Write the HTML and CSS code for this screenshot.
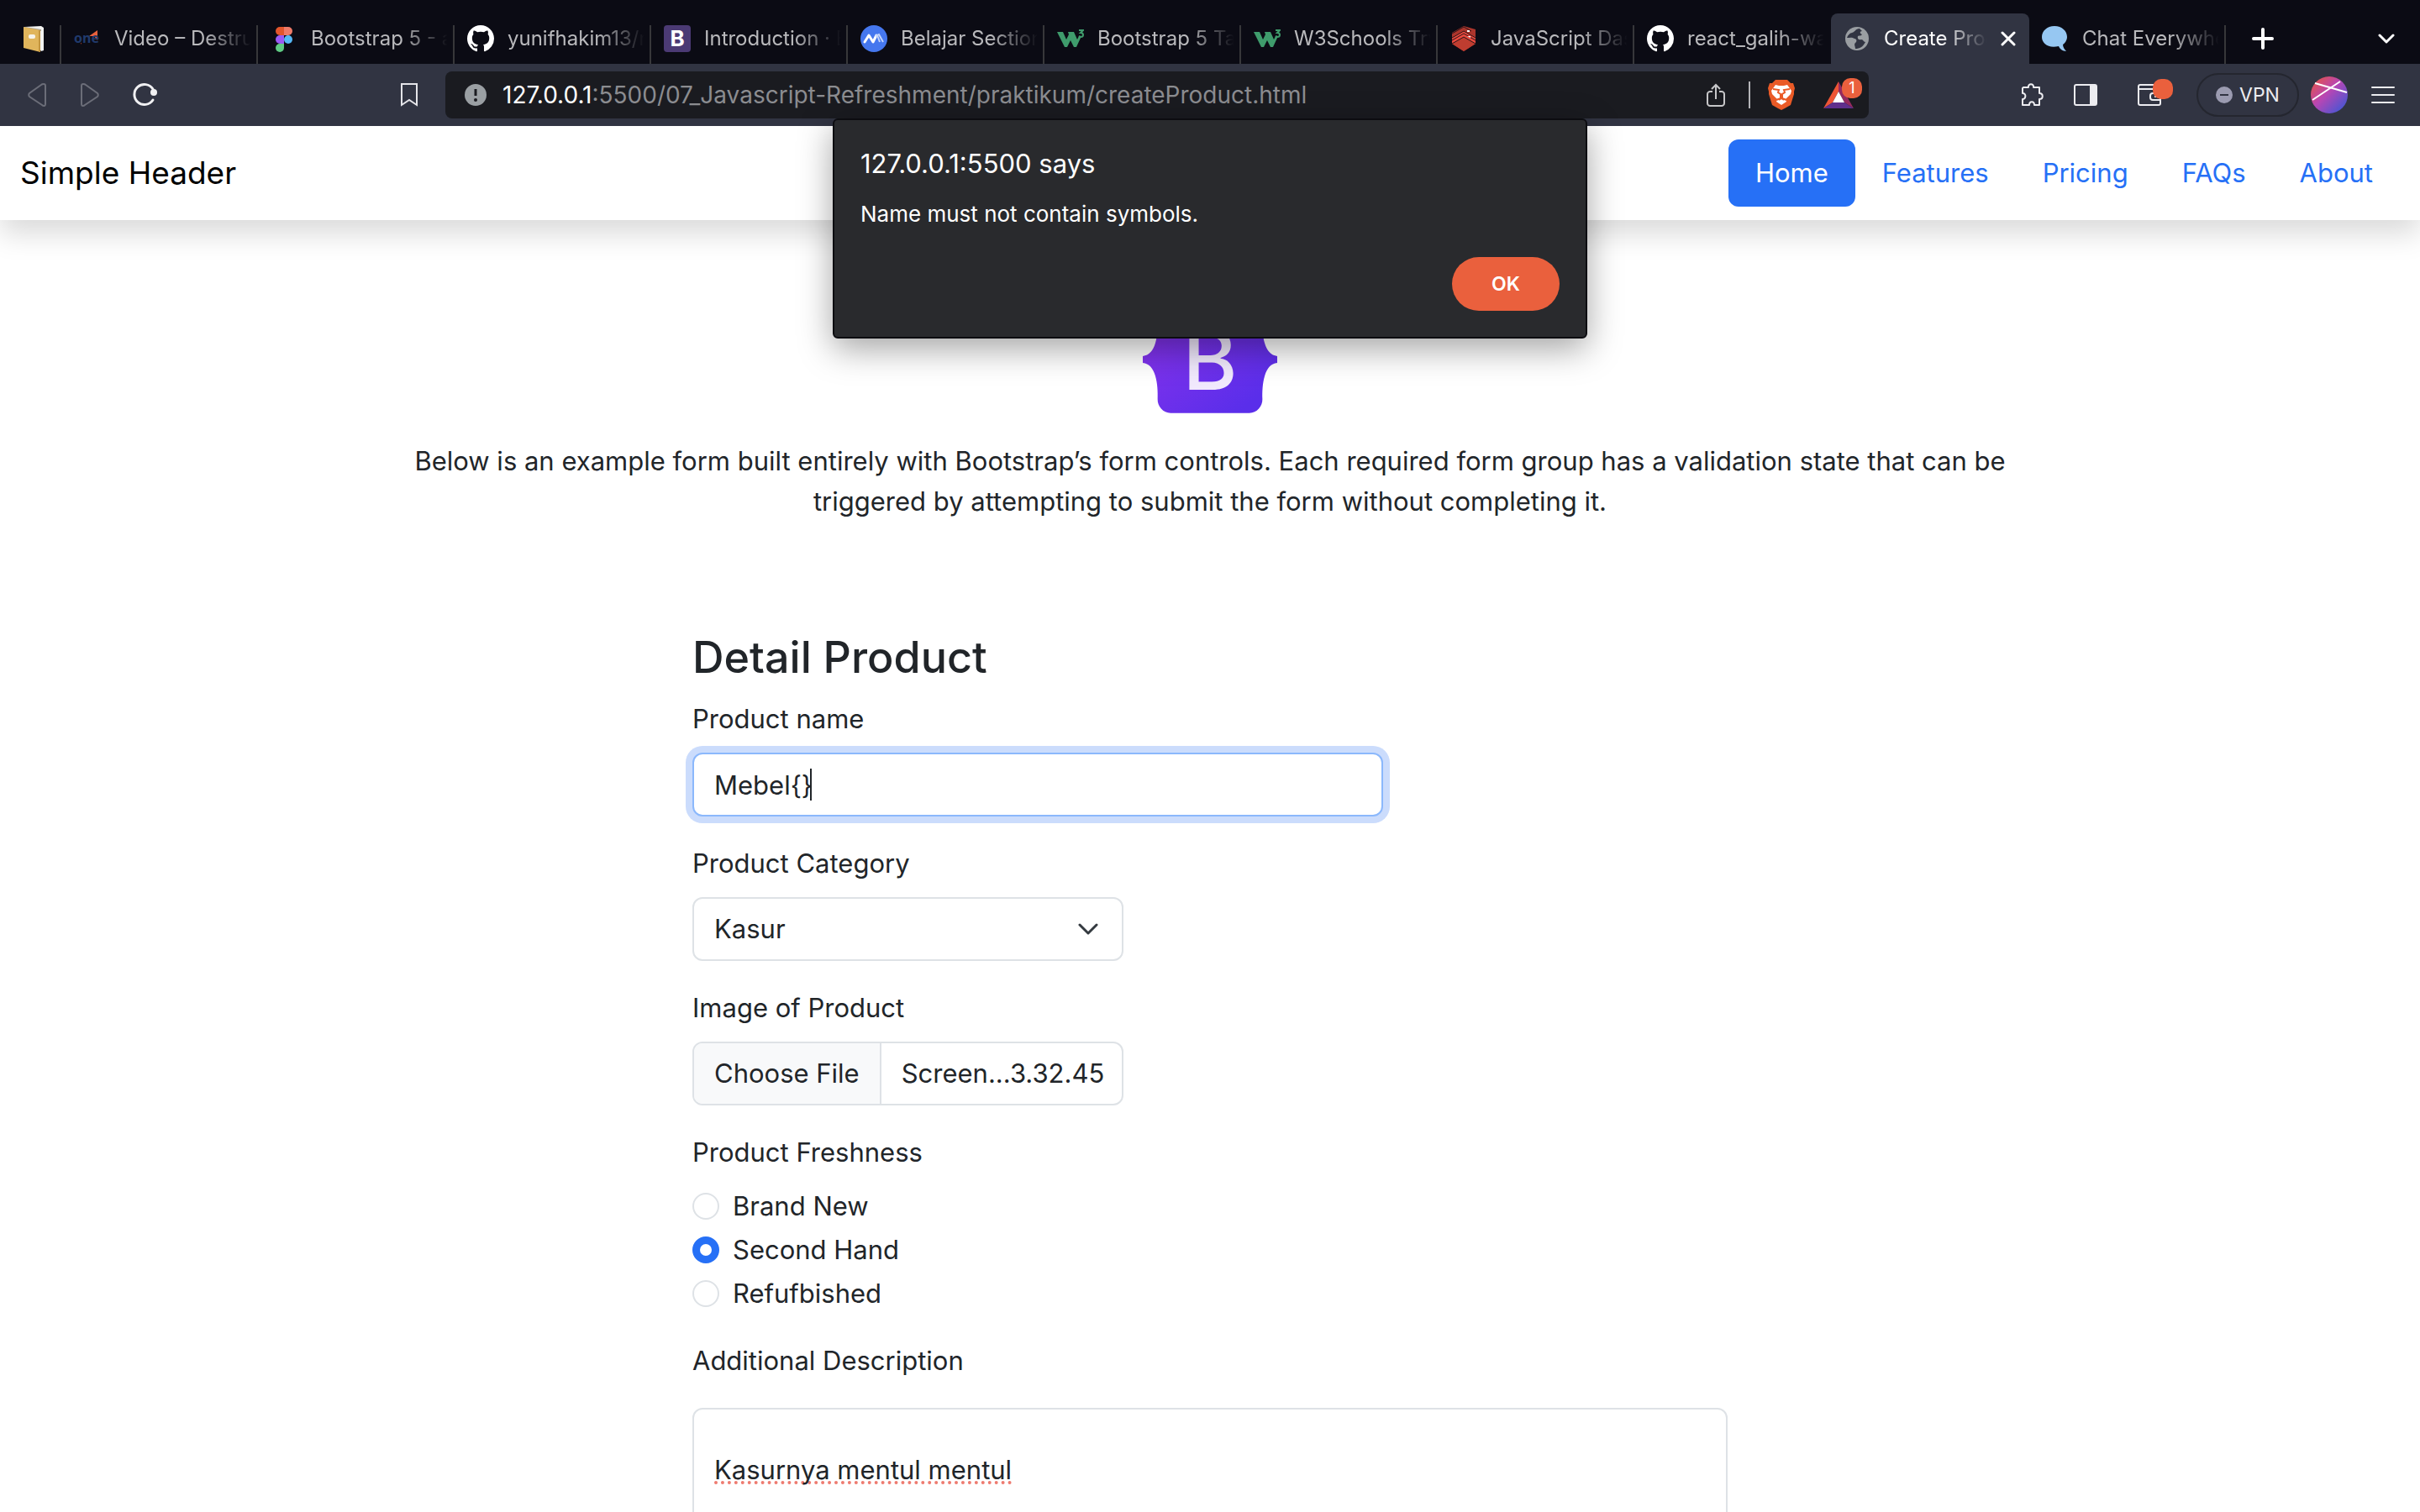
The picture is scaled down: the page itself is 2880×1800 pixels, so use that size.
FILE: index.html
```html
<!DOCTYPE html>
<html lang="en">
<head>
  <meta charset="utf-8">
  <title>Create Product</title>
  <link rel="stylesheet" href="styles.css">
</head>
<body>
  <svg class="sprite" aria-hidden="true">
    <symbol id="github" viewBox="0 0 16 16">
      <path fill="#fff" d="M8 0C3.58 0 0 3.58 0 8c0 3.54 2.29 6.53 5.47 7.59.4.07.55-.17.55-.38 0-.19-.01-.82-.01-1.49-2.01.37-2.53-.49-2.69-.94-.09-.23-.48-.94-.82-1.13-.28-.15-.68-.52-.01-.53.63-.01 1.08.58 1.23.82.72 1.21 1.87.87 2.33.66.07-.52.28-.87.51-1.07-1.78-.2-3.64-.89-3.64-3.95 0-.87.31-1.59.82-2.15-.08-.2-.36-1.02.08-2.12 0 0 .67-.21 2.2.82.64-.18 1.32-.27 2-.27s1.36.09 2 .27c1.53-1.04 2.2-.82 2.2-.82.44 1.1.16 1.92.08 2.12.51.56.82 1.27.82 2.15 0 3.07-1.87 3.75-3.65 3.95.29.25.54.73.54 1.48 0 1.07-.01 1.93-.01 2.2 0 .21.15.46.55.38A8.01 8.01 0 0 0 16 8c0-4.42-3.58-8-8-8z"/>
    </symbol>
    <symbol id="w3" viewBox="0 0 32 32">
      <path fill="#3f9c6c" d="M0 8h7l4 9 3-6-1-3h7l4 9 2-4h3l-6 13h-3l-4-8-4 8H9z"/>
      <path fill="none" stroke="#3f9c6c" stroke-width="2" d="M26 6h5l-3 3c4 0 4 5 0 5l-2-1"/>
    </symbol>
  </svg>

  <div class="browser-bar">
    <nav class="tabs" aria-label="Open tabs">
      <a class="tab tab-pinned" href="#" aria-label="Pinned tab">
        <svg class="tab-icon" viewBox="0 0 32 32"><path fill="#f3f3f1" d="M5 2l20-1 3 2v27l-3 1z"/><path fill="#a9a295" d="M6 2l19 3v2L6 3z"/><path fill="#e0b55c" d="M4 2l20 4v26L4 27z"/><path fill="#c39540" d="M22 6l2 0v26l-2-1z"/><rect x="10" y="11" width="8" height="5" rx="2" fill="#f6f3ea"/></svg>
      </a>
      <a class="tab" href="#">
        <svg class="tab-icon" viewBox="0 0 32 32"><path fill="#e8613c" d="M18 13l10-7v12l-4-5z"/><text class="one-logo" x="0" y="21">one</text><path fill="#c5482e" d="M8 21h1v2z"/></svg>
        <span class="tab-name">Video – Destruct</span>
      </a>
      <a class="tab" href="#">
        <svg class="tab-icon" viewBox="0 0 32 32"><path fill="#e2552c" d="M11 2h5v10h-5a5 5 0 0 1 0-10z"/><path fill="#ee7a68" d="M16 2h5a5 5 0 0 1 0 10h-5z"/><path fill="#9a59f5" d="M11 12h5v10h-5a5 5 0 0 1 0-10z"/><circle fill="#55b8f7" cx="21" cy="17" r="5"/><path fill="#5fca83" d="M11 22h5v5a5 5 0 1 1-5-5z"/></svg>
        <span class="tab-name">Bootstrap 5 - and</span>
      </a>
      <a class="tab" href="#"><svg class="tab-icon"><use href="#github"/></svg><span class="tab-name">yunifhakim13/re</span></a>
      <a class="tab" href="#">
        <svg class="tab-icon" viewBox="0 0 32 32"><rect width="32" height="32" rx="4" fill="#4b3a74"/><text class="b-favicon" x="16" y="25">B</text></svg>
        <span class="tab-name">Introduction · Bo</span>
      </a>
      <a class="tab" href="#">
        <svg class="tab-icon" viewBox="0 0 32 32"><circle cx="16" cy="16" r="16" fill="#4577ee"/><path fill="none" stroke="#fff" stroke-width="3" stroke-linecap="round" stroke-linejoin="round" d="M5 20l5-8 5 8 4-8"/><path fill="none" stroke="#c3d4fb" stroke-width="2" d="M18 13l4-2 5 9M20 12l3 8"/></svg>
        <span class="tab-name">Belajar Section</span>
      </a>
      <a class="tab" href="#"><svg class="tab-icon"><use href="#w3"/></svg><span class="tab-name">Bootstrap 5 Tab</span></a>
      <a class="tab" href="#"><svg class="tab-icon"><use href="#w3"/></svg><span class="tab-name">W3Schools Tryit</span></a>
      <a class="tab" href="#">
        <svg class="tab-icon" viewBox="0 0 32 32"><path fill="#ab352c" d="M2 9l14-8 14 4v17L16 31 2 22z"/><path fill="#e8493e" d="M2 15l14-8 14 8v7l-14-8-14 8z"/><path fill="#bf3d30" d="M2 22l14-8 14 8-14 9z"/><path fill="none" stroke="#2c1518" stroke-width="1" d="M2 10l14-8 9 5M2 15l14-8 14 8M2 22l14-8 14 8M2 18l14-8 14 8"/><path fill="#fff" d="M20 6h3v2h-3zM20 13h4v2z"/></svg>
        <span class="tab-name">JavaScript Dasar</span>
      </a>
      <a class="tab tab-before-active" href="#"><svg class="tab-icon"><use href="#github"/></svg><span class="tab-name">react_galih-wah</span></a>
      <div class="tab tab-active">
        <svg class="tab-icon" viewBox="0 0 32 32"><circle cx="16" cy="16" r="14" fill="#9a9ea2"/><path fill="#313442" d="M19 4c-5 0-5 4-9 5-2 0-5 3-6 6 3 0 6-1 9 1 3 0 3 4 1 5-2 2 0 4 0 7 5 0 9-2 12-8-3 0-2-3-5-3-3 1-5-1-4-4 2-1 4 0 5-2-3-1-3-4 0-4z"/></svg>
        <a class="tab-name" href="#">Create Product</a>
        <button class="tab-close" type="button" aria-label="Close tab"><svg width="18" height="18" viewBox="0 0 18 18"><path d="M2 2l14 14M16 2L2 16" stroke="#fff" stroke-width="3" stroke-linecap="round"/></svg></button>
      </div>
      <a class="tab" href="#">
        <svg class="tab-icon" viewBox="0 0 32 32"><path fill="#96c7f2" d="M15 1c9 0 15 6 15 13 0 4-3 8-5 9 0 3 2 6 4 8-4 0-8-3-9-6C8 28 0 22 0 14 0 7 6 1 15 1z"/></svg>
        <span class="tab-name">Chat Everywhere</span>
      </a>
      <button class="icon-button new-tab" type="button" aria-label="New tab"><svg width="26" height="26" viewBox="0 0 26 26"><path d="M13 2v22M2 13h22" stroke="#fff" stroke-width="4" stroke-linecap="round"/></svg></button>
      <button class="icon-button tab-search" type="button" aria-label="Search tabs"><svg width="20" height="14" viewBox="0 0 20 14"><path d="M2 2l8 8 8-8" fill="none" stroke="#fff" stroke-width="3" stroke-linecap="round" stroke-linejoin="round"/></svg></button>
    </nav>

    <div class="toolbar">
      <div class="nav-buttons">
        <button class="icon-button" type="button" aria-label="Back"><svg width="24" height="30" viewBox="0 0 24 30"><path d="M20 2c2 0 2 1 2 2v22c0 2-2 3-4 1L3 17c-1-1-1-3 0-4L17 3c1-1 2-1 3-1z" fill="none" stroke="#6b6d78" stroke-width="2"/></svg></button>
        <button class="icon-button" type="button" aria-label="Forward"><svg width="24" height="30" viewBox="0 0 24 30"><path d="M4 2C2 2 2 3 2 4v22c0 2 2 3 4 1l15-10c1-1 1-3 0-4L7 3C6 2 5 2 4 2z" fill="none" stroke="#6b6d78" stroke-width="2"/></svg></button>
        <button class="icon-button" type="button" aria-label="Reload"><svg width="30" height="30" viewBox="0 0 30 30"><path d="M24 21a12 12 0 1 1 0-13" fill="none" stroke="#f0f0f2" stroke-width="3" stroke-linecap="round"/><circle cx="25" cy="12" r="4" fill="#f0f0f2"/></svg></button>
      </div>
      <button class="icon-button bookmark" type="button" aria-label="Bookmark"><svg width="22" height="28" viewBox="0 0 22 28"><path d="M2 1h18v25l-9-6-9 6z" fill="none" stroke="#e4e4e8" stroke-width="2"/></svg></button>
      <div class="address">
        <svg width="28" height="28" viewBox="0 0 28 28"><circle cx="14" cy="14" r="13" fill="#9a9fa3"/><path d="M14 7v8" stroke="#1a1b20" stroke-width="3"/><circle cx="14" cy="20" r="2" fill="#1a1b20"/></svg>
        <span class="url"><span class="url-host">127.0.0.1</span>:5500/07_Javascript-Refreshment/praktikum/createProduct.html</span>
        <button class="icon-button" type="button" aria-label="Share"><svg width="22" height="28" viewBox="0 0 22 28"><path d="M7 10H4c-1 0-3 1-3 3v11c0 2 2 3 3 3h14c1 0 3-1 3-3V13c0-2-2-3-3-3h-3M11 19V2M6 7l5-5 5 5" fill="none" stroke="#c6c6c8" stroke-width="2"/></svg></button>
        <span class="address-rule"></span>
        <button class="icon-button" type="button" aria-label="Shields"><svg width="32" height="36" viewBox="0 0 32 36"><path fill="#ea5a26" d="M9 0h14l4 4 3 0 2 6-1 4 0 3-4 13-7 4-4 2-4-2-7-4L1 17v-3L0 10l2-6h3z"/><path fill="#fff" d="M9 6l4 1h6l4-1 5 7-1 4-6 6 1 3-6 4-6-4 1-3-6-6-1-4z"/><path fill="none" stroke="#ea5a26" stroke-width="2" d="M6 11l7 1-1 3 3 2v5l-5 2M26 11l-7 1 1 3-3 2v5l5 2M13 24l3-2 3 2"/></svg></button>
        <button class="icon-button rewards" type="button" aria-label="Rewards"><svg width="36" height="32" viewBox="0 0 36 32"><path fill="#ee5535" d="M18 0v12l-7 13L0 32z"/><path fill="#952a5f" d="M18 0l18 32-11-7-7-13z"/><path fill="#5f2f8c" d="M0 32l11-7h14l11 7z"/><path fill="#fff" d="M18 12l7 13H11z"/></svg><span class="badge">1</span></button>
      </div>
      <div class="tools">
        <button class="icon-button" type="button" aria-label="Extensions"><svg width="28" height="28" viewBox="0 0 28 28"><path d="M4 5h6c-1-5 7-5 6 0h7v7c5 0 5 7 0 7v7h-6c0-5-6-5-6 0H3v-7c4 0 5-7 0-7V6z" fill="none" stroke="#ececf0" stroke-width="2" stroke-linejoin="round"/></svg></button>
        <button class="icon-button" type="button" aria-label="Side panel"><svg width="28" height="26" viewBox="0 0 28 26"><rect x="1" y="1" width="26" height="24" rx="2" fill="none" stroke="#ececf0" stroke-width="2"/><path fill="#ececf0" d="M19 1h8v24h-8z"/></svg></button>
        <button class="icon-button wallet" type="button" aria-label="Wallet"><svg width="28" height="26" viewBox="0 0 28 26"><path d="M27 5V3c0-1 0-2-2-2H3C2 1 1 2 1 3v20c0 1 1 2 2 2h22c2 0 2-1 2-2V6H2M27 11H18c-2 0-3 1-3 3v2c0 2 1 3 3 3h9M20 15h2" fill="none" stroke="#ececf0" stroke-width="2"/></svg><span class="badge"></span></button>
        <button class="vpn" type="button"><svg width="20" height="20" viewBox="0 0 20 20"><circle cx="10" cy="10" r="10" fill="#9b9bb0"/><path d="M5 10h10" stroke="#313442" stroke-width="2"/></svg>VPN</button>
        <button class="icon-button profile" type="button" aria-label="Profile"><svg width="44" height="44" viewBox="0 0 44 44"><defs><linearGradient id="avatar" x1="0" y1="0" x2="1" y2="1"><stop offset=".1" stop-color="#e2524f"/><stop offset=".45" stop-color="#b846b4"/><stop offset=".9" stop-color="#4556d4"/></linearGradient></defs><circle cx="22" cy="22" r="22" fill="url(#avatar)"/><path d="M5 8l38 11M35 6L2 28" stroke="#fff" stroke-width="2"/></svg></button>
        <button class="icon-button" type="button" aria-label="Menu"><svg width="28" height="22" viewBox="0 0 28 22"><path d="M1 2h26M1 11h26M1 20h26" stroke="#ececf0" stroke-width="2" stroke-linecap="round"/></svg></button>
      </div>
    </div>
  </div>

  <div class="page">
    <header class="site-header">
      <a class="brand" href="#">Simple Header</a>
      <nav class="site-nav">
        <a class="nav-link nav-link-active" href="#">Home</a>
        <a class="nav-link" href="#">Features</a>
        <a class="nav-link" href="#">Pricing</a>
        <a class="nav-link" href="#">FAQs</a>
        <a class="nav-link" href="#">About</a>
      </nav>
    </header>

    <main>
      <section class="intro">
        <svg class="logo" viewBox="0 0 512 408" role="img" aria-label="Bootstrap">
          <defs><linearGradient id="purple" x1="0" y1="0" x2="1" y2="1"><stop offset=".2" stop-color="#8232ec"/><stop offset=".85" stop-color="#5a2eea"/></linearGradient></defs>
          <path fill="url(#purple)" d="M56.481 53.32C55.515 25.58 77.128 0 106.342 0h299.353c29.214 0 50.827 25.58 49.861 53.32-.928 26.65.277 61.165 8.964 89.31 8.715 28.232 23.411 46.077 47.48 48.37v26c-24.069 2.293-38.765 20.138-47.48 48.37-8.687 28.145-9.892 62.66-8.964 89.31.966 27.74-20.647 53.32-49.861 53.32H106.342c-29.214 0-50.827-25.58-49.86-53.32.927-26.65-.278-61.165-8.966-89.31C38.802 237.138 24.07 219.293 0 217v-26c24.069-2.293 38.765-20.138 47.516-48.37 8.688-28.145 9.893-62.66 8.965-89.31z"/>
          <text class="logo-letter" x="256" y="318">B</text>
        </svg>
        <p>Below is an example form built entirely with Bootstrap’s form controls. Each required form group has a validation state that can be triggered by attempting to submit the form without completing it.</p>
      </section>

      <form class="product-form">
        <h2>Detail Product</h2>

        <div class="field">
          <label for="name">Product name</label>
          <div class="name-box">
            <input class="control control-focus" id="name" type="text" value="Mebel{}">
            <span class="caret"></span>
          </div>
        </div>

        <div class="field">
          <label for="category">Product Category</label>
          <div class="select-box">
            <select class="control" id="category"><option>Kasur</option></select>
            <svg class="select-arrow" width="24" height="16" viewBox="0 0 24 16"><path d="M2 3l10 10L22 3" fill="none" stroke="#343a40" stroke-width="3" stroke-linecap="round" stroke-linejoin="round"/></svg>
          </div>
        </div>

        <div class="field">
          <label for="image">Image of Product</label>
          <div class="file-box">
            <input class="file-input" id="image" type="file">
            <label class="file-button" for="image">Choose File</label>
            <span class="file-name">Screen...3.32.45</span>
          </div>
        </div>

        <fieldset class="field">
          <legend>Product Freshness</legend>
          <label class="choice"><input type="radio" name="freshness">Brand New</label>
          <label class="choice"><input type="radio" name="freshness" checked>Second Hand</label>
          <label class="choice"><input type="radio" name="freshness">Refufbished</label>
        </fieldset>

        <div class="field field-description">
          <label for="description">Additional Description</label>
          <textarea class="control" id="description" spellcheck="false">Kasurnya mentul mentul</textarea>
        </div>
      </form>
    </main>
  </div>

  <div class="alert" role="alertdialog" aria-labelledby="alert-title" aria-describedby="alert-text">
    <h1 class="alert-title" id="alert-title">127.0.0.1:5500 says</h1>
    <p class="alert-text" id="alert-text">Name must not contain symbols.</p>
    <button class="alert-ok" type="button">OK</button>
  </div>
</body>
</html>
```
FILE: styles.css
```css
* { box-sizing: border-box; }

body {
  margin: 0;
  height: 100vh;
  display: flex;
  flex-direction: column;
  overflow: hidden;
  background: #fff;
  color: #212529;
  font: 31px/48px Inter, "Liberation Sans", sans-serif;
}

button, input, select, textarea { font: inherit; color: inherit; }
a { text-decoration: none; }
svg { display: block; flex: none; }
.sprite { position: absolute; width: 0; height: 0; }

.icon-button {
  position: relative;
  display: flex;
  padding: 0;
  border: 0;
  background: none;
}

/* Browser tabs */
.browser-bar { flex: none; background: #0b0b14; }

.tabs {
  display: flex;
  align-items: flex-end;
  height: 76px;
  padding-right: 30px;
}

.tab {
  position: relative;
  display: flex;
  align-items: center;
  gap: 16px;
  flex: 0 1 234px;
  min-width: 0;
  height: 60px;
  padding: 0 8px 0 15px;
  color: #b9b9bc;
  font-size: 24px;
  line-height: 32px;
}

.tab::after {
  content: "";
  position: absolute;
  right: 0;
  bottom: 0;
  width: 2px;
  height: 46px;
  background: #37373a;
}

.tab-pinned { flex: 0 0 73px; padding: 0 0 0 24px; }
.tab-active { flex-basis: 236px; border-radius: 8px 8px 0 0; background: #313442; color: #fff; }
.tab-active::after, .tab-before-active::after { display: none; }
.tab-icon { width: 32px; height: 32px; }

.tab-name {
  flex: 1;
  min-width: 0;
  overflow: hidden;
  color: inherit;
  white-space: nowrap;
  mask-image: linear-gradient(to left, transparent, #000 56px);
}

.tab-close { display: flex; margin-right: 8px; padding: 0; border: 0; background: none; }
.new-tab { align-self: flex-start; margin: 33px 0 0 31px; }
.tab-search { align-self: flex-start; margin: 40px 0 0 auto; }

.one-logo { fill: #203a6c; font: 700 16px "Noto Sans", sans-serif; }
.b-favicon { fill: #fff; font: 700 26px Inter, sans-serif; text-anchor: middle; }

/* Toolbar */
.toolbar {
  display: flex;
  align-items: center;
  height: 74px;
  padding: 0 30px 0 32px;
  background: #313442;
  line-height: 32px;
}

.nav-buttons { display: flex; align-items: center; gap: 39px; }
.bookmark { margin: 0 32px 0 auto; }

.address {
  display: flex;
  align-items: center;
  gap: 18px;
  flex: 0 0 1694px;
  height: 56px;
  padding: 0 18px 0 22px;
  border-radius: 8px;
  background: #1a1b20;
  color: #8b8c90;
  font-size: 28px;
}

.url { flex: 1; white-space: nowrap; }
.url-host { color: #fff; }
.address-rule { width: 2px; height: 32px; margin: 0 3px 0 10px; background: #b4b4b8; }
.rewards { margin-left: 16px; }

.badge {
  position: absolute;
  top: -4px;
  right: -10px;
  width: 24px;
  height: 24px;
  border-radius: 10px;
  background: #ea603d;
  color: #fff;
  font-size: 18px;
  line-height: 24px;
  text-align: center;
}

.wallet .badge { top: -6px; right: -14px; }

.tools { display: flex; align-items: center; gap: 36px; flex: none; margin-left: 180px; }
.wallet { margin-left: 12px; margin-right: 6px; }
.profile { margin-right: -8px; }

.vpn {
  display: flex;
  align-items: center;
  justify-content: center;
  gap: 8px;
  width: 122px;
  height: 52px;
  margin-right: -22px;
  padding: 0;
  border: 2px solid #24262f;
  border-radius: 26px;
  background: none;
  color: #ececf0;
  font-size: 23px;
}

/* Site header */
.page { flex: 1; min-height: 0; overflow: hidden; }

.site-header {
  display: flex;
  align-items: center;
  justify-content: space-between;
  padding: 16px 24px;
  background: #fff;
  box-shadow: 0 16px 32px rgba(0, 0, 0, 0.15);
}

.brand { color: #000; font-size: 37px; }
.site-nav { display: flex; }
.nav-link { padding: 16px 32px; border-radius: 12px; color: #2670f6; }
.nav-link-active { background: #2670f6; color: #fff; }

/* Intro */
.intro {
  display: flex;
  flex-direction: column;
  align-items: center;
  gap: 33px;
  padding: 102px 0 128px;
  text-align: center;
}

.intro p { max-width: 1936px; margin: 0; }
.logo { width: 160px; height: 128px; }
.logo-letter { fill: #f1e9fd; font: 500 317px Inter, sans-serif; text-anchor: middle; }

/* Product form */
.product-form { width: 1232px; max-width: 100%; margin: 0 auto; }
.product-form h2 { margin: 0 0 16px; font-size: 52px; font-weight: 500; line-height: 67px; }

.field {
  display: flex;
  flex-direction: column;
  align-items: flex-start;
  gap: 16px;
  margin: 0 0 32px;
  padding: 0;
  border: 0;
}

.control {
  display: block;
  width: 100%;
  height: 76px;
  padding: 12px 24px;
  border: 2px solid #dee2e6;
  border-radius: 12px;
  outline: 0;
  background: #fff;
}

.control-focus { border-color: #8bb8fc; box-shadow: 0 0 0 8px #cbdcfc; }
.name-box { position: relative; width: 822px; }
.caret { position: absolute; left: 140px; top: 19px; width: 2px; height: 38px; background: #212529; }
.select-box { position: relative; width: 513px; }
.select-box select { appearance: none; }
.select-arrow { position: absolute; right: 30px; top: 30px; }

.file-box {
  position: relative;
  display: flex;
  width: 513px;
  border: 2px solid #dee2e6;
  border-radius: 12px;
  overflow: hidden;
  white-space: nowrap;
}

.file-input { position: absolute; inset: 0; opacity: 0; }
.file-button { padding: 12px 24px; border-right: 2px solid #dee2e6; background: #f8f9fa; }
.file-name { padding: 12px 0 12px 24px; }

legend { padding: 0; margin-bottom: 16px; }
fieldset.field { display: block; }
.choice { display: flex; align-items: center; gap: 16px; }
.choice + .choice { margin-top: 4px; }

.choice input {
  appearance: none;
  width: 32px;
  height: 32px;
  margin: 0;
  border: 2px solid #dee2e6;
  border-radius: 50%;
}

.choice input:checked { border: 9px solid #2670f6; }

.field-description { gap: 32px; }

textarea.control {
  height: 240px;
  padding-top: 48px;
  resize: none;
  text-decoration: underline dotted #ee7b70 4px;
  text-underline-offset: 2px;
  text-decoration-skip-ink: none;
}

/* JavaScript alert */
.alert {
  position: absolute;
  top: 141px;
  left: 50%;
  width: 898px;
  height: 262px;
  padding: 32px 31px 31px 31px;
  display: flex;
  flex-direction: column;
  transform: translateX(-50%);
  border: 2px solid #0c0c10;
  border-radius: 6px;
  background: #292a2d;
  box-shadow: 0 12px 40px rgba(0, 0, 0, 0.36);
  color: #fff;
}

.alert-title { margin: 0 0 20px; font-size: 31px; font-weight: 400; line-height: 40px; }
.alert-text { margin: 0; font-size: 26px; line-height: 40px; }

.alert-ok {
  align-self: flex-end;
  width: 128px;
  height: 64px;
  margin-top: auto;
  padding: 0;
  border: 0;
  border-radius: 32px;
  background: #ea603d;
  font-size: 23px;
  font-weight: 600;
}
```
